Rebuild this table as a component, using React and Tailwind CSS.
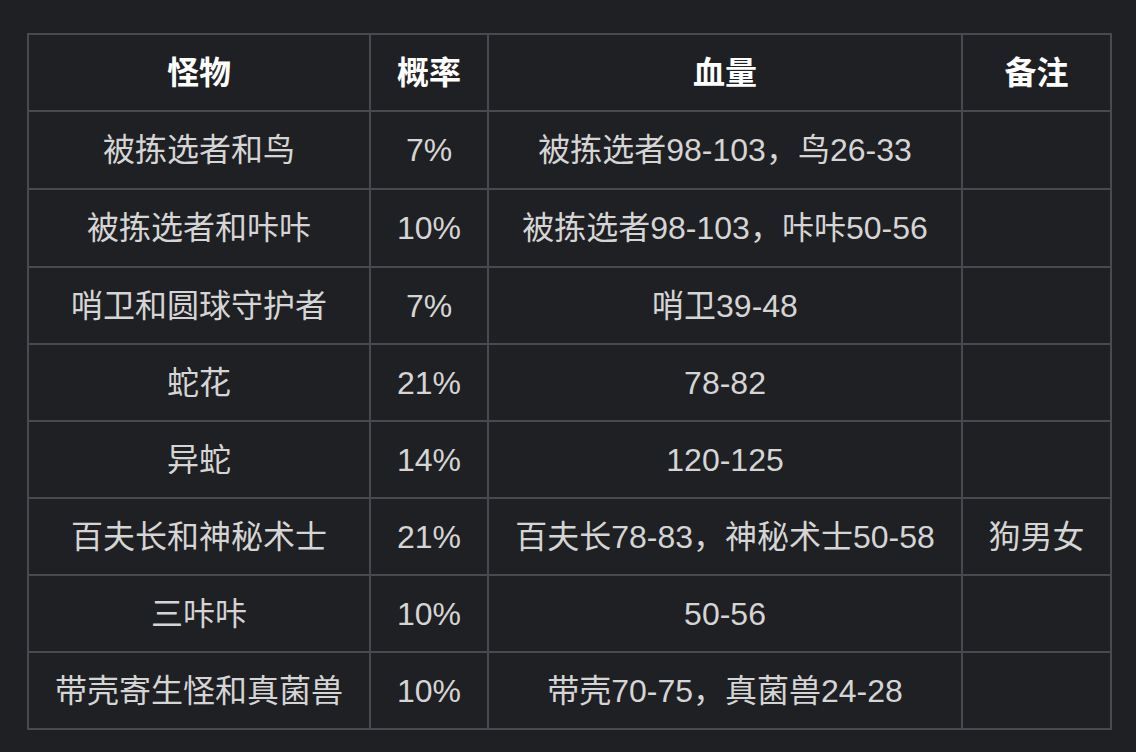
const rows = [
  ['被拣选者和鸟', '7%', '被拣选者98-103，鸟26-33', ''],
  ['被拣选者和咔咔', '10%', '被拣选者98-103，咔咔50-56', ''],
  ['哨卫和圆球守护者', '7%', '哨卫39-48', ''],
  ['蛇花', '21%', '78-82', ''],
  ['异蛇', '14%', '120-125', ''],
  ['百夫长和神秘术士', '21%', '百夫长78-83，神秘术士50-58', '狗男女'],
  ['三咔咔', '10%', '50-56', ''],
  ['带壳寄生怪和真菌兽', '10%', '带壳70-75，真菌兽24-28', ''],
];

const heights = ['h-[78px]', 'h-[78px]', 'h-[77px]', 'h-[77px]', 'h-[77px]', 'h-[77px]', 'h-[77px]', 'h-[77px]'];

const Cell = ({ children, h, head }) => (
  <div
    className={`${h} flex items-center justify-center border-r-2 border-b-2 border-[#474a4e] whitespace-nowrap ${
      head ? 'font-bold text-white' : 'text-[#d5d5d5]'
    }`}
  >
    {children}
  </div>
);

export default function App() {
  return (
    <div
      className="w-[1136px] h-[752px] bg-[#1f2023] pt-[33px] pl-[27px] overflow-hidden"
      style={{ fontFamily: '"Liberation Sans", "Noto Sans CJK SC", sans-serif' }}
    >
      <div className="grid grid-cols-[342px_118px_474px_149px] w-[1085px] border-l-2 border-t-2 border-[#474a4e] text-[32px] leading-none">
        {['怪物', '概率', '血量', '备注'].map((t) => (
          <Cell key={t} h="h-[77px]" head>
            {t}
          </Cell>
        ))}
        {rows.map((r, i) =>
          r.map((c, j) => (
            <Cell key={i + '-' + j} h={heights[i]}>
              {c}
            </Cell>
          ))
        )}
      </div>
    </div>
  );
}
